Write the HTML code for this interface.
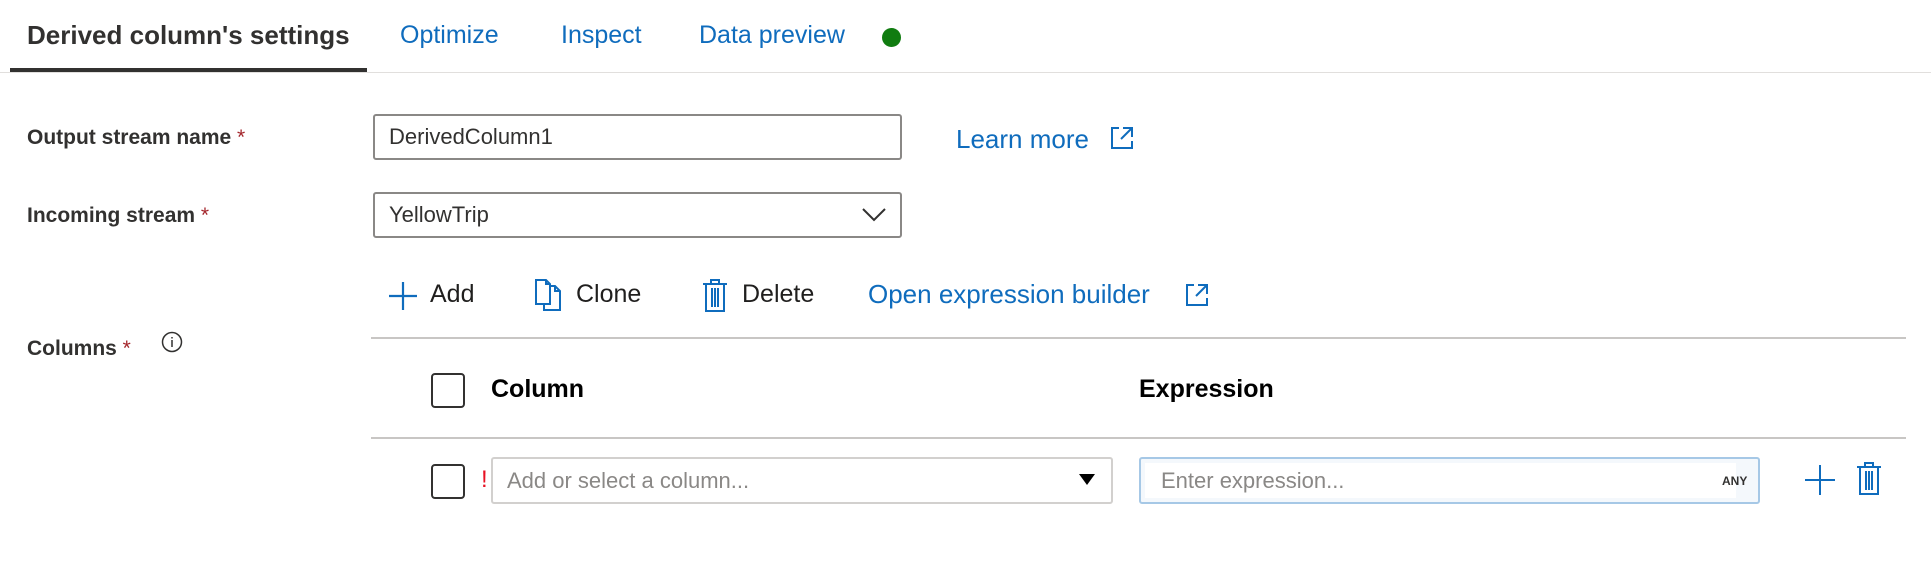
<!DOCTYPE html>
<html><head><meta charset="utf-8"><style>
*{margin:0;padding:0;box-sizing:border-box}
body{width:1931px;height:583px;background:#fff;font-family:"Liberation Sans",sans-serif;position:relative;overflow:hidden;color:#323130}
.a{position:absolute;white-space:nowrap}
.tab{font-size:25px;color:#0f6cbd;top:21px}
.lbl{font-size:21px;font-weight:bold;color:#323130}
.req{color:#a4262c;font-weight:normal}
.box{position:absolute;border:2px solid #8a8886;border-radius:3px;background:#fff;font-size:22px;color:#323130;padding-left:14px;display:flex;align-items:center}
.blue{color:#0f6cbd}
.tb{font-size:25px;color:#201f1e;top:280px}
.cb{position:absolute;width:34px;height:35px;border:2px solid #323130;border-radius:4px;background:#fff}
</style></head><body>
<div class="a" style="left:27px;top:20px;font-size:26px;font-weight:bold;color:#323130">Derived column's settings</div>
<div class="a" style="left:10px;top:68px;width:357px;height:4px;background:#323130"></div>
<div class="a" style="left:0;top:72px;width:1931px;height:1px;background:#e1dfdd"></div>
<div class="a tab" style="left:400px">Optimize</div>
<div class="a tab" style="left:561px">Inspect</div>
<div class="a tab" style="left:699px">Data preview</div>
<div class="a" style="left:882px;top:28px;width:19px;height:19px;border-radius:50%;background:#107c10"></div>

<div class="a lbl" style="left:27px;top:126px">Output stream name <span class="req">*</span></div>
<div class="box" style="left:373px;top:114px;width:529px;height:46px">DerivedColumn1</div>
<div class="a blue" style="left:956px;top:124px;font-size:26px">Learn more</div>
<svg class="a" style="left:1109px;top:125px" width="26" height="26" viewBox="0 0 26 26" fill="none" stroke="#0f6cbd" stroke-width="2"><path d="M10 3H3v20h20v-7M14 3h9v9M23 3L12 14"/></svg>

<div class="a lbl" style="left:27px;top:204px">Incoming stream <span class="req">*</span></div>
<div class="box" style="left:373px;top:192px;width:529px;height:46px">YellowTrip</div>
<svg class="a" style="left:862px;top:207px" width="24" height="16" viewBox="0 0 24 16" fill="none" stroke="#323130" stroke-width="2"><path d="M1 2l11 11L23 2"/></svg>

<svg class="a" style="left:389px;top:282px" width="28" height="28" viewBox="0 0 28 28" stroke="#0f6cbd" stroke-width="2.2"><path d="M14 0v28M0 14h28"/></svg>
<div class="a tb" style="left:430px">Add</div>
<svg class="a" style="left:535px;top:279px" width="26" height="32" viewBox="0 0 26 32" fill="none" stroke="#0f6cbd" stroke-width="2"><path d="M1 1h10l4 4v20H1z M11 1v4h4 M15 7h5l5 5v19H9v-6 M20 7v5h5"/></svg>
<div class="a tb" style="left:576px">Clone</div>
<svg class="a" style="left:703px;top:278px" width="24" height="34" viewBox="0 0 24 34" fill="none" stroke="#0f6cbd" stroke-width="2"><path d="M0 6h24M8 6V2h8v4M3 6v27h18V6M9 10v19M12 10v19M15 10v19"/></svg>
<div class="a tb" style="left:742px">Delete</div>
<div class="a blue" style="left:868px;top:279px;font-size:26px">Open expression builder</div>
<svg class="a" style="left:1184px;top:282px" width="26" height="26" viewBox="0 0 26 26" fill="none" stroke="#0f6cbd" stroke-width="2"><path d="M10 3H3v20h20v-7M14 3h9v9M23 3L12 14"/></svg>

<div class="a" style="left:371px;top:337px;width:1535px;height:2px;background:#c8c6c4"></div>
<div class="a lbl" style="left:27px;top:337px">Columns <span class="req">*</span></div>
<svg class="a" style="left:161px;top:331px" width="22" height="22" viewBox="0 0 22 22" fill="none" stroke="#323130" stroke-width="1.5"><circle cx="11" cy="11" r="9.5"/><path d="M11 9v7M11 6v1.5"/></svg>

<div class="cb" style="left:431px;top:373px"></div>
<div class="a" style="left:491px;top:375px;font-size:25px;font-weight:bold;color:#000">Column</div>
<div class="a" style="left:1139px;top:375px;font-size:25px;font-weight:bold;color:#000">Expression</div>
<div class="a" style="left:371px;top:437px;width:1535px;height:2px;background:#c8c6c4"></div>

<div class="cb" style="left:431px;top:464px"></div>
<div class="a" style="left:481px;top:466px;font-size:24px;color:#e81123">!</div>
<div class="box" style="left:491px;top:457px;width:622px;height:47px;border-color:#d2d0ce;color:#8a8886;font-size:22px">Add or select a column...</div>
<svg class="a" style="left:1079px;top:474px" width="16" height="12" viewBox="0 0 16 12"><path d="M0 0h16L8 11z" fill="#000"/></svg>
<div class="box" style="left:1139px;top:457px;width:621px;height:47px;border-color:#a6c8e6;background:#f4f8fc;padding:4px 22px 4px 4px">
<div style="background:#fff;height:100%;width:100%;display:flex;align-items:center;padding-left:16px;color:#8a8886;font-size:22px">Enter expression...</div></div>
<div class="a" style="left:1722px;top:474px;font-size:12px;font-weight:bold;color:#323130">ANY</div>
<svg class="a" style="left:1805px;top:465px" width="30" height="30" viewBox="0 0 30 30" stroke="#0f6cbd" stroke-width="2"><path d="M15 0v30M0 15h30"/></svg>
<svg class="a" style="left:1857px;top:461px" width="24" height="34" viewBox="0 0 24 34" fill="none" stroke="#0f6cbd" stroke-width="2"><path d="M0 6h24M8 6V2h8v4M3 6v27h18V6M9 10v19M12 10v19M15 10v19"/></svg>
</body></html>
